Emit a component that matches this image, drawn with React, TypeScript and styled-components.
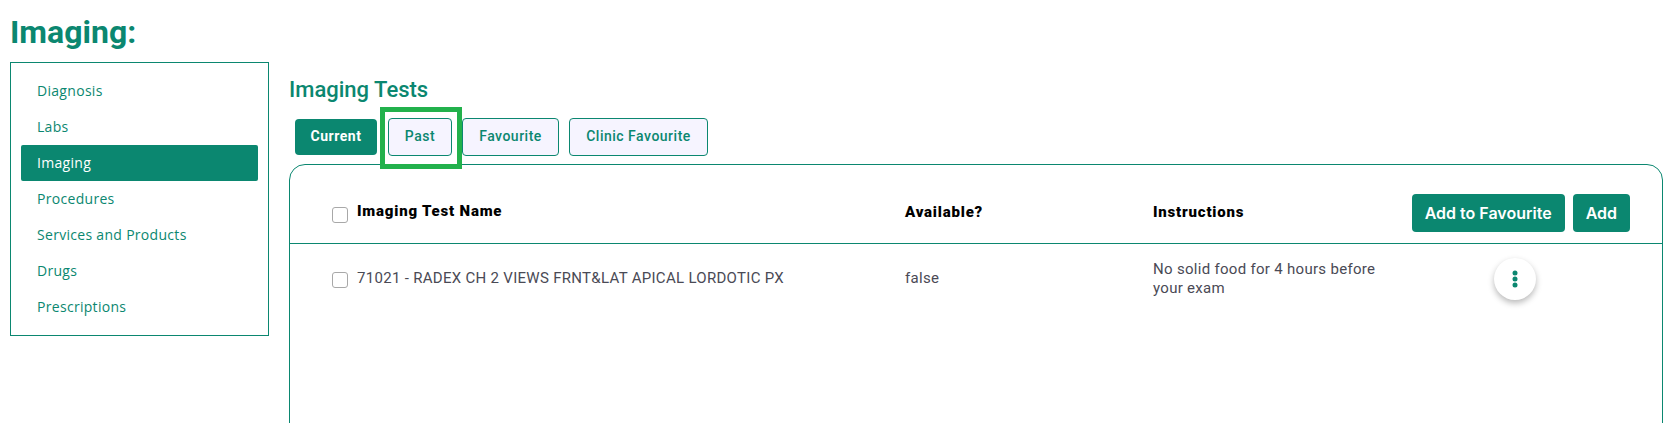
import React from "react";
import styled, { createGlobalStyle } from "styled-components";

const GREEN = "#0b8770";

const GlobalStyle = createGlobalStyle`
  html, body {
    margin: 0;
    height: 423px;
    overflow: hidden;
    background: #fff;
    font-family: Roboto, "Liberation Sans", sans-serif;
  }
  * { box-sizing: border-box; }
`;

const Page = styled.div`
  width: 1680px;
  height: 423px;
  padding-left: 10px;
  overflow: hidden;
`;

const Title = styled.h1`
  margin: 0;
  height: 62px;
  padding-top: 13px;
  font-size: 32px;
  line-height: 38px;
  font-weight: 700;
  color: ${GREEN};
`;

const Columns = styled.div`
  display: flex;
  align-items: flex-start;
  gap: 20px;
`;

const SideNav = styled.nav`
  width: 259px;
  height: 274px;
  flex: none;
  padding: 10px 10px 0;
  border: 1px solid ${GREEN};
  display: flex;
  flex-direction: column;
`;

const NavItem = styled.a<{ $active?: boolean }>`
  height: 36px;
  flex: none;
  display: flex;
  align-items: center;
  padding: 0 0 2px 16px;
  border-radius: 2px;
  font-family: "Open Sans", sans-serif;
  font-size: 14px;
  font-weight: 500;
  letter-spacing: 0.3px;
  color: ${(p) => (p.$active ? "#fff" : GREEN)};
  background: ${(p) => (p.$active ? GREEN : "transparent")};
`;

const Main = styled.section`
  width: 1374px;
  flex: none;
`;

const SectionTitle = styled.h2`
  margin: 13px 0 0;
  font-size: 22px;
  line-height: 30px;
  font-weight: 500;
  color: ${GREEN};
`;

const Tabs = styled.div`
  position: relative;
  display: flex;
  align-items: center;
  gap: 10px;
  height: 38px;
  margin-top: 13px;
  padding-left: 6px;
`;

const Tab = styled.button<{ $active?: boolean; $width: number }>`
  width: ${(p) => p.$width}px;
  height: ${(p) => (p.$active ? 36 : 38)}px;
  margin-right: ${(p) => (p.$active ? 1 : 0)}px;
  padding: 0 0 2px;
  border: ${(p) => (p.$active ? "none" : `1px solid ${GREEN}`)};
  border-radius: 4px;
  font-family: Roboto, sans-serif;
  font-size: 14px;
  font-weight: ${(p) => (p.$active ? 700 : 500)};
  letter-spacing: 0.5px;
  color: ${(p) => (p.$active ? "#fff" : GREEN)};
  background: ${(p) => (p.$active ? GREEN : "#f6f4ff")};
`;

const Highlight = styled.div`
  position: absolute;
  left: 91px;
  top: -11px;
  width: 82px;
  height: 62px;
  border: 5px solid #22b14c;
  pointer-events: none;
`;

const Table = styled.div`
  margin-top: 8px;
  height: 300px;
  border: 1px solid ${GREEN};
  border-radius: 16px 16px 0 0;
`;

const Row = styled.div<{ $head?: boolean }>`
  display: grid;
  grid-template-columns: 573px 248px 260px 1fr;
  padding-left: 42px;
  height: ${(p) => (p.$head ? "79px" : "auto")};
  align-items: ${(p) => (p.$head ? "center" : "start")};
  padding-top: ${(p) => (p.$head ? "17px" : "24px")};
  border-bottom: ${(p) => (p.$head ? `1px solid ${GREEN}` : "none")};
`;

const NameCell = styled.div`
  display: flex;
  align-items: flex-start;
  gap: 9px;
`;

const Check = styled.span`
  width: 16px;
  height: 16px;
  flex: none;
  margin-top: 4px;
  border: 1px solid #a8a8a8;
  border-radius: 3px;
  background: #fff;
`;

const HeadText = styled.span`
  font-family: Roboto, sans-serif;
  font-size: 15px;
  line-height: 20px;
  font-weight: 900;
  letter-spacing: 0.8px;
  color: #000;
  margin-top: -2px;
`;

const BodyText = styled.div<{ $top?: number; $width?: number }>`
  font-size: 15px;
  line-height: 19px;
  letter-spacing: 0.3px;
  color: #4a4a55;
  margin-top: ${(p) => p.$top ?? 0}px;
  max-width: ${(p) => (p.$width ? `${p.$width}px` : "none")};
`;

const HeadActions = styled.div`
  display: flex;
  justify-content: flex-end;
  gap: 8px;
  padding-right: 32px;
  margin-left: -30px;
`;

const ActionButton = styled.button`
  height: 38px;
  padding: 0 13px;
  border: none;
  border-radius: 4px;
  font-family: Inter, sans-serif;
  font-size: 16px;
  font-weight: 600;
  color: #fff;
  background: ${GREEN};
`;

const MenuCell = styled.div`
  padding-left: 81px;
`;

const RoundButton = styled.button`
  width: 42px;
  height: 42px;
  margin-top: -10px;
  padding: 0;
  display: flex;
  align-items: center;
  justify-content: center;
  border: none;
  border-radius: 50%;
  background: #fff;
  box-shadow: 0 3px 6px rgba(0, 0, 0, 0.28);
`;

export default function App() {
  return (
    <Page>
      <GlobalStyle />
      <Title>Imaging:</Title>
      <Columns>
        <SideNav>
          <NavItem>Diagnosis</NavItem>
          <NavItem>Labs</NavItem>
          <NavItem $active>Imaging</NavItem>
          <NavItem>Procedures</NavItem>
          <NavItem>Services and Products</NavItem>
          <NavItem>Drugs</NavItem>
          <NavItem>Prescriptions</NavItem>
        </SideNav>
        <Main>
          <SectionTitle>Imaging Tests</SectionTitle>
          <Tabs>
            <Tab $active $width={82}>Current</Tab>
            <Tab $width={64}>Past</Tab>
            <Tab $width={97}>Favourite</Tab>
            <Tab $width={139}>Clinic Favourite</Tab>
            <Highlight />
          </Tabs>
          <Table>
            <Row $head>
              <NameCell>
                <Check />
                <HeadText>Imaging Test Name</HeadText>
              </NameCell>
              <HeadText>Available?</HeadText>
              <HeadText>Instructions</HeadText>
              <HeadActions>
                <ActionButton>Add to Favourite</ActionButton>
                <ActionButton>Add</ActionButton>
              </HeadActions>
            </Row>
            <Row>
              <NameCell>
                <Check />
                <BodyText $top={1}>71021 - RADEX CH 2 VIEWS FRNT&amp;LAT APICAL LORDOTIC PX</BodyText>
              </NameCell>
              <BodyText $top={1}>false</BodyText>
              <BodyText $top={-8} $width={235}>No solid food for 4 hours before your exam</BodyText>
              <MenuCell>
                <RoundButton>
                  <svg width="6" height="18" viewBox="0 0 6 18">
                    <circle cx="3" cy="3" r="2.5" fill={GREEN} />
                    <circle cx="3" cy="9" r="2.5" fill={GREEN} />
                    <circle cx="3" cy="15" r="2.5" fill={GREEN} />
                  </svg>
                </RoundButton>
              </MenuCell>
            </Row>
          </Table>
        </Main>
      </Columns>
    </Page>
  );
}
